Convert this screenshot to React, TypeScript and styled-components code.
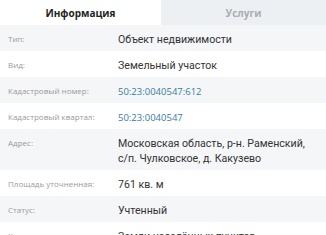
import styled, { createGlobalStyle } from 'styled-components';

const GlobalStyle = createGlobalStyle`
  html, body {
    margin: 0;
    padding: 0;
    background: #ffffff;
    font-family: 'Open Sans', 'Liberation Sans', sans-serif;
  }
`;

interface IRow {
  label: string;
  value: string;
  link?: boolean;
}

const rows: IRow[] = [
  { label: 'Тип:', value: 'Объект недвижимости' },
  { label: 'Вид:', value: 'Земельный участок' },
  { label: 'Кадастровый номер:', value: '50:23:0040547:612', link: true },
  { label: 'Кадастровый квартал:', value: '50:23:0040547', link: true },
  { label: 'Адрес:', value: 'Московская область, р-н. Раменский, с/п. Чулковское, д. Какузево' },
  { label: 'Площадь уточненная:', value: '761 кв. м' },
  { label: 'Статус:', value: 'Учтенный' },
  { label: 'Категория земель:', value: 'Земли населённых пунктов' },
];

const S = {
  Panel: styled.div`
    width: 326px;
    height: 235px;
    overflow: hidden;
    background: #ffffff;
  `,
  Tabs: styled.div`
    display: grid;
    grid-template-columns: 161px 1fr;
    height: 25px;
  `,
  Tab: styled.div<{ $active?: boolean }>`
    display: flex;
    align-items: center;
    justify-content: center;
    font-size: 10px;
    font-weight: 700;
    color: ${({ $active }) => ($active ? '#1f1f1f' : '#a9adb3')};
    background: ${({ $active }) => ($active ? '#ffffff' : '#edf0f3')};
  `,
  Row: styled.div<{ $shaded: boolean }>`
    display: grid;
    grid-template-columns: 110px 1fr;
    padding: 7px 10px 4px 8px;
    background: ${({ $shaded }) => ($shaded ? '#f5f6f8' : '#ffffff')};
  `,
  Label: styled.div`
    font-size: 8px;
    line-height: 13px;
    color: #9a9a9a;
  `,
  Value: styled.div<{ $link?: boolean }>`
    font-family: ${({ $link }) => ($link ? "'Open Sans'" : 'Roboto')}, sans-serif;
    font-size: ${({ $link }) => ($link ? '9.5px' : '10.6px')};
    line-height: 15px;
    color: ${({ $link }) => ($link ? '#3a7ca5' : '#333333')};
  `,
};

const App = () => {
  return (
    <>
      <GlobalStyle />
      <S.Panel>
        <S.Tabs>
          <S.Tab $active>Информация</S.Tab>
          <S.Tab>Услуги</S.Tab>
        </S.Tabs>
        {rows.map((row, i) => (
          <S.Row key={row.label} $shaded={i % 2 === 0}>
            <S.Label>{row.label}</S.Label>
            <S.Value $link={row.link}>{row.value}</S.Value>
          </S.Row>
        ))}
      </S.Panel>
    </>
  );
};

export default App;
